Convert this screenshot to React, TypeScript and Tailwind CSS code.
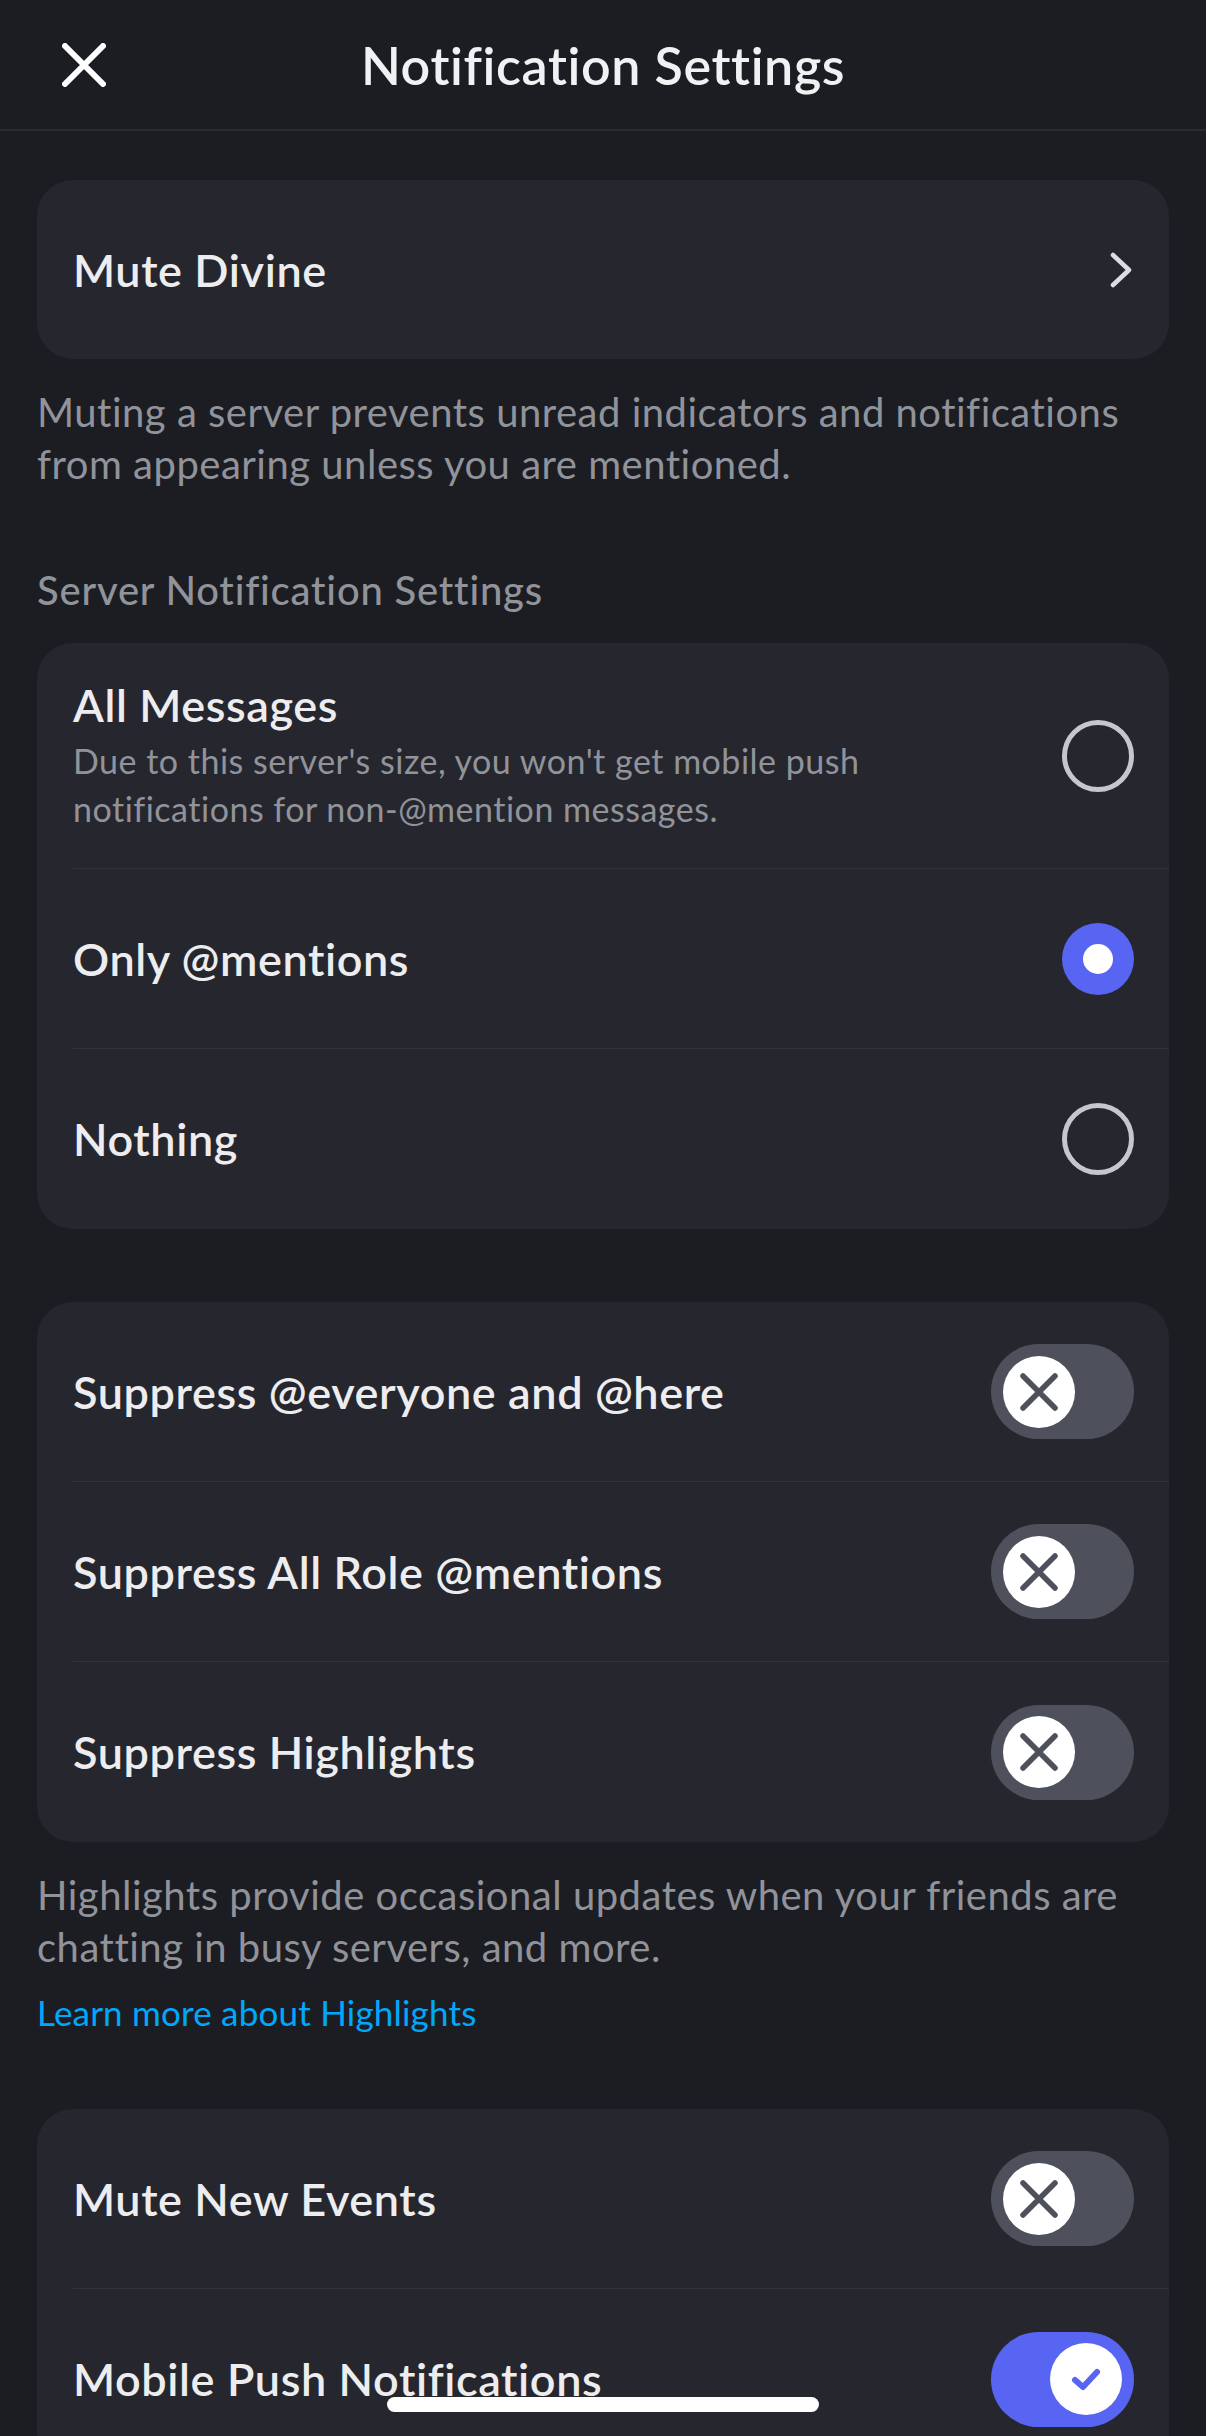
const CloseIcon = () => (
  <svg width="44" height="44" viewBox="0 0 44 44" fill="none">
    <path d="M3 3L41 41M41 3L3 41" stroke="#ffffff" strokeWidth="6" strokeLinecap="round" />
  </svg>
);

const Chevron = () => (
  <svg width="24" height="36" viewBox="0 0 24 36" fill="none">
    <path d="M4 3L20 18L4 33" stroke="#dcdde1" strokeWidth="4.5" strokeLinecap="round" strokeLinejoin="round" />
  </svg>
);

function Radio({ checked }: { checked?: boolean }) {
  if (checked) {
    return (
      <div className="flex h-[72px] w-[72px] shrink-0 items-center justify-center rounded-full bg-[#5865f2]">
        <div className="h-[30px] w-[30px] rounded-full bg-white" />
      </div>
    );
  }
  return <div className="h-[72px] w-[72px] shrink-0 rounded-full border-[5px] border-[#c6c7cd]" />;
}

function Toggle({ on }: { on?: boolean }) {
  return (
    <div
      className={
        on
          ? "flex h-[95px] w-[143px] shrink-0 items-center justify-end rounded-full bg-[#5865f2] px-[12px]"
          : "flex h-[95px] w-[143px] shrink-0 items-center justify-start rounded-full bg-[#4e505c] px-[12px]"
      }
    >
      <div className="flex h-[72px] w-[72px] items-center justify-center rounded-full bg-white">
        {on ? (
          <svg width="40" height="40" viewBox="0 0 40 40" fill="none">
            <path d="M9 21L17 28L31 13" stroke="#5865f2" strokeWidth="6" strokeLinecap="round" strokeLinejoin="round" />
          </svg>
        ) : (
          <svg width="40" height="40" viewBox="0 0 40 40" fill="none">
            <path d="M4 4L36 36M36 4L4 36" stroke="#4e505c" strokeWidth="5.5" strokeLinecap="round" />
          </svg>
        )}
      </div>
    </div>
  );
}

function Row({
  children,
  last,
  tall,
}: {
  children: React.ReactNode;
  last?: boolean;
  tall?: boolean;
}) {
  return (
    <div className="pl-[36px]">
      <div
        className={[
          "flex items-center justify-between gap-6 pr-[35px]",
          tall ? "h-[226px]" : "h-[180px]",
          last ? "" : "border-b border-[#33343c]",
        ].join(" ")}
      >
        {children}
      </div>
    </div>
  );
}

const rowTitle = "text-[45px] font-semibold leading-[52px] tracking-[0.6px] text-[#ededf0]";
const note = "text-[40px] leading-[52px] tracking-[0.5px] text-[#91939b]";

export default function App() {
  return (
    <div className="relative h-[2436px] w-[1206px] overflow-hidden bg-[#1c1d22] font-['Lato','Noto_Sans',sans-serif]">
      <header className="relative flex h-[131px] items-center justify-center border-b-2 border-[#2a2b31]">
        <div className="absolute left-[62px] top-[43px]">
          <CloseIcon />
        </div>
        <h1 className="text-[52px] font-semibold tracking-[0.6px] text-[#f0f1f3]">Notification Settings</h1>
      </header>

      <main className="px-[37px] pt-[49px]">
        <div className="overflow-hidden rounded-[36px] bg-[#26272e]">
          <div className="flex h-[179px] items-center justify-between pl-[36px] pr-[36px]">
            <span className={rowTitle}>Mute Divine</span>
            <Chevron />
          </div>
        </div>
        <p className={`mt-[27px] ${note}`}>
          Muting a server prevents unread indicators and notifications from appearing unless you are mentioned.
        </p>

        <h2 className="mt-[74px] text-[40px] font-medium leading-[52px] tracking-[0.8px] text-[#91939b]">
          Server Notification Settings
        </h2>

        <div className="mt-[27px] overflow-hidden rounded-[36px] bg-[#26272e]">
          <Row tall>
            <div className="flex flex-col gap-[6px]">
              <span className={rowTitle}>All Messages</span>
              <span className="max-w-[820px] text-[34px] leading-[48px] tracking-[0.5px] text-[#91939b]">
                Due to this server's size, you won't get mobile push notifications for non-@mention messages.
              </span>
            </div>
            <Radio />
          </Row>
          <Row>
            <span className={rowTitle}>Only @mentions</span>
            <Radio checked />
          </Row>
          <Row last>
            <span className={rowTitle}>Nothing</span>
            <Radio />
          </Row>
        </div>

        <div className="mt-[73px] overflow-hidden rounded-[36px] bg-[#26272e]">
          <Row>
            <span className={rowTitle}>Suppress @everyone and @here</span>
            <Toggle />
          </Row>
          <Row>
            <span className={rowTitle}>Suppress All Role @mentions</span>
            <Toggle />
          </Row>
          <Row last>
            <span className={rowTitle}>Suppress Highlights</span>
            <Toggle />
          </Row>
        </div>
        <p className={`mt-[27px] ${note}`}>
          Highlights provide occasional updates when your friends are chatting in busy servers, and more.
        </p>
        <a className="mt-[15px] block text-[35px] leading-[48px] tracking-[0.2px] text-[#00a8fc]">
          Learn more about Highlights
        </a>

        <div className="mt-[73px] overflow-hidden rounded-[36px] bg-[#26272e]">
          <Row>
            <span className={rowTitle}>Mute New Events</span>
            <Toggle />
          </Row>
          <Row last>
            <span className={rowTitle}>Mobile Push Notifications</span>
            <Toggle on />
          </Row>
        </div>
      </main>

      <div className="absolute left-[387px] top-[2397px] h-[15px] w-[432px] rounded-full bg-white" />
    </div>
  );
}
